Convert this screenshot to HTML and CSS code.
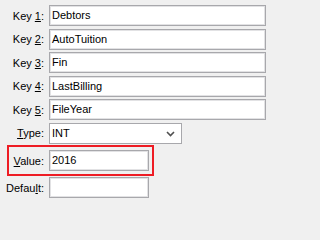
FILE: index.html
```html
<!DOCTYPE html>
<html>
<head>
<meta charset="utf-8">
<link rel="stylesheet" href="styles.css">
</head>
<body>
<div class="form">
  <div class="row"><label class="lbl">Key <u>1</u>:</label><div class="box wide">Debtors</div></div>
  <div class="row"><label class="lbl">Key <u>2</u>:</label><div class="box wide">AutoTuition</div></div>
  <div class="row"><label class="lbl">Key <u>3</u>:</label><div class="box wide">Fin</div></div>
  <div class="row"><label class="lbl">Key <u>4</u>:</label><div class="box wide">LastBilling</div></div>
  <div class="row"><label class="lbl">Key <u>5</u>:</label><div class="box wide">FileYear</div></div>
  <div class="row"><label class="lbl"><u>T</u>ype:</label><div class="box select"><span>INT</span><svg class="chev" width="9" height="6" viewBox="0 0 9 6"><path d="M1 1 L4.5 4.5 L8 1" fill="none" stroke="#505050" stroke-width="1.6"/></svg></div></div>
  <div class="row value-row"><label class="lbl"><u>V</u>alue:</label><div class="box narrow">2016</div></div>
  <div class="row last"><label class="lbl">Defau<u>l</u>t:</label><div class="box narrow"></div></div>
</div>
</body>
</html>
```
FILE: styles.css
```css
html, body {
  margin: 0;
  padding: 0;
  background: #f0f0f0;
}
body {
  width: 271px;
  height: 202px;
  overflow: hidden;
  font-family: "Liberation Sans", Arial, sans-serif;
  font-size: 11px;
  color: #000;
}
.form {
  display: flex;
  flex-direction: column;
  gap: 2.5px;
  padding: 5px 5px 0 0;
}
.row {
  display: grid;
  grid-template-columns: 44px 1fr;
  column-gap: 5px;
  align-items: center;
  height: 21px;
}
.lbl {
  text-align: right;
  color: #000;
  white-space: nowrap;
}
.lbl u {
  text-decoration-thickness: 1px;
  text-underline-offset: 1px;
}
.box {
  box-sizing: border-box;
  height: 21px;
  background: #fff;
  border: 1px solid #a8a8ac;
  box-shadow: inset 0 0 0 1px #e2e2e4;
  padding: 0 2px;
  display: flex;
  align-items: center;
  line-height: 19px;
}
.wide { width: 217px; }
.narrow { width: 100px; }
.select {
  width: 133px;
  justify-content: space-between;
  padding-right: 6px;
  box-shadow: none;
}
.chev { display: block; margin-top: 1px; }
.value-row {
  position: relative;
  margin-top: 4px;
}
.value-row::before {
  content: "";
  position: absolute;
  left: 7px;
  top: -5.5px;
  width: 147px;
  height: 31.5px;
  box-sizing: border-box;
  border: 2px solid #ee1c24;
  pointer-events: none;
}
.last { margin-top: 3.5px; }
```
